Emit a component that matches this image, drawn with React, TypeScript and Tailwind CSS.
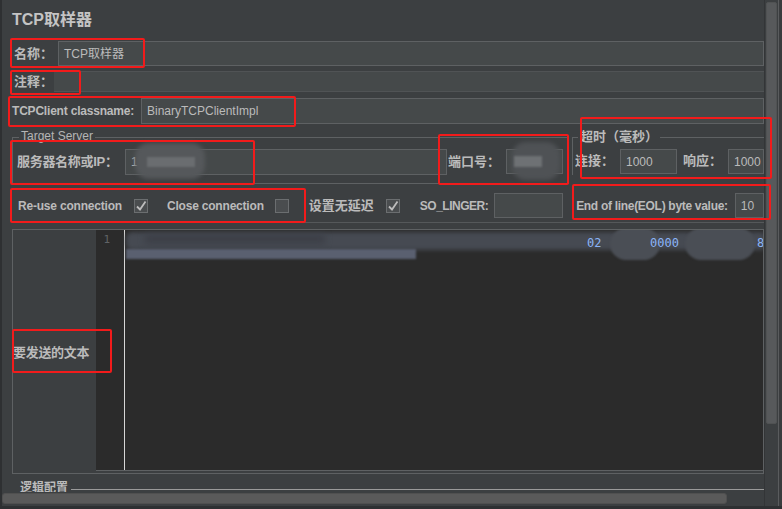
import React from "react";

const font = "font-['Liberation_Sans','Noto_Sans_CJK_SC',sans-serif]";

function Field({ value, className = "" }: { value?: string; className?: string }) {
  return (
    <div
      className={`h-full bg-[#45494a] border border-[#5e6163] flex items-center pl-[5px] text-[12px] text-[#bbbbbb] whitespace-nowrap ${className}`}
    >
      {value}
    </div>
  );
}

function Check({ checked, className = "" }: { checked?: boolean; className?: string }) {
  return (
    <div
      className={`shrink-0 w-[14px] h-[14px] bg-[#4a4d4f] border border-[#6b6e70] flex items-center justify-center ${className}`}
    >
      {checked && (
        <svg width="12" height="12" viewBox="0 0 12 12">
          <path d="M2 6.5 L5 9.5 L10.5 1.5" fill="none" stroke="#bdbdbd" strokeWidth="1.8" />
        </svg>
      )}
    </div>
  );
}

function Mark({ className }: { className: string }) {
  // red annotation frame drawn over the screenshot
  return <div className={`absolute border-2 border-[#f21b1b] rounded-[2px] pointer-events-none ${className}`} />;
}

export default function App() {
  return (
    <div
      className={`relative w-[782px] h-[509px] overflow-hidden bg-[#3c3f41] ${font} text-[#bbbbbb] border-l-2 border-b-[3px] border-[#2e3032]`}
    >
      <div className="flex h-full">
        {/* main form */}
        <div className="w-[762px] flex flex-col pl-[10px]">
          <div className="h-[38px] pt-[10px] text-[16px] leading-[20px] font-bold text-[#c4c4c4]">TCP取样器</div>

          {/* 名称 */}
          <div className="mt-[3px] h-[25px] flex items-center">
            <div className="shrink-0 w-[46px] pl-[2px] text-[13px] font-bold whitespace-nowrap">名称：</div>
            <Field value="TCP取样器" className="flex-1" />
          </div>

          {/* 注释 */}
          <div className="mt-[5px] h-[21px] flex items-center">
            <div className="shrink-0 w-[42px] pl-[2px] text-[13px] font-bold whitespace-nowrap">注释：</div>
            <div className="flex-1 h-full bg-[#45494a] border-y border-[#505355]" />
          </div>

          {/* classname */}
          <div className="mt-[5px] h-[28px] flex items-center py-[1px]">
            <div className="shrink-0 w-[129px] text-[12px] font-bold tracking-[-0.2px] whitespace-nowrap">TCPClient classname:</div>
            <Field value="BinaryTCPClientImpl" className="flex-1" />
          </div>

          {/* groups */}
          <div className="mt-[3px] h-[57px] flex">
            {/* Target Server */}
            <div className="shrink-0 w-[557px] relative pt-[9px]">
              <div className="absolute left-[7px] top-[2px] px-[2px] bg-[#3c3f41] text-[12px] leading-[13px] text-[#b5b5b5]">
                Target Server
              </div>
              <div className="h-[47px] border-l border-t border-b border-[#5e6163] flex items-center pl-[4px] pt-[2px]">
                <div className="shrink-0 w-[108px] text-[13px] font-bold whitespace-nowrap tracking-[-0.3px]">服务器名称或IP：</div>
                <div className="shrink-0 relative w-[322px] h-[26px]">
                  <Field value="1" className="w-full" />
                  <div className="absolute left-[10px] top-[-6px] w-[70px] h-[36px] rounded-[14px] bg-[#55585b] blur-[2px]" />
                  <div className="absolute left-[22px] top-[8px] w-[48px] h-[10px] bg-[#6a6d70] blur-[1px]" />
                </div>
                <div className="shrink-0 ml-[1px] w-[58px] text-[13px] font-bold whitespace-nowrap">端口号：</div>
                <div className="shrink-0 relative w-[57px] h-[25px]">
                  <Field className="w-full" />
                  <div className="absolute left-[6px] top-[-7px] w-[48px] h-[38px] rounded-[14px] bg-[#4f5255] blur-[2px]" />
                  <div className="absolute left-[8px] top-[7px] w-[28px] h-[11px] bg-[#6e7174] blur-[1px]" />
                </div>
              </div>
            </div>

            {/* 超时 */}
            <div className="ml-[3px] flex-1 relative pt-[9px]">
              <div className="absolute left-[6px] top-[1px] px-[2px] bg-[#3c3f41] text-[13px] leading-[15px] font-bold whitespace-nowrap">
                超时（毫秒）
              </div>
              <div className="h-[38px] border-l border-t border-[#5e6163] flex items-end pb-[1px] pl-[2px]">
                <div className="shrink-0 w-[45px] text-[13px] font-bold pb-[4px] whitespace-nowrap">连接：</div>
                <Field value="1000" className="shrink-0 w-[57px] !h-[25px]" />
                <div className="shrink-0 ml-[6px] w-[45px] text-[13px] font-bold pb-[4px] whitespace-nowrap">响应：</div>
                <Field value="1000" className="flex-1 !h-[25px]" />
              </div>
            </div>
          </div>

          {/* checkbox row */}
          <div className="mt-[8px] h-[25px] flex items-center text-[12px] whitespace-nowrap">
            <div className="shrink-0 ml-[6px] font-bold tracking-[-0.2px]">Re-use connection</div>
            <Check checked className="ml-[12px]" />
            <div className="shrink-0 ml-[19px] font-bold tracking-[-0.2px]">Close connection</div>
            <Check className="ml-[11px]" />
            <div className="shrink-0 ml-[20px] font-bold text-[13px]">设置无延迟</div>
            <Check checked className="ml-[12px]" />
            <div className="shrink-0 ml-[20px] font-bold tracking-[-0.5px]">SO_LINGER:</div>
            <Field className="shrink-0 ml-[6px] w-[69px]" />
            <div className="shrink-0 ml-[13px] font-bold tracking-[-0.3px]">End of line(EOL) byte value:</div>
            <Field value="10" className="ml-[7px] flex-1 min-w-0" />
          </div>

          {/* editor */}
          <div className="mt-[4px] border-t border-[#55585a]" />
          <div className="mt-[6px] h-[245px] border border-[#5e6163] flex">
            <div className="shrink-0 w-[83px] flex items-center text-[13px] font-bold pt-[2px] whitespace-nowrap tracking-[-0.3px]">要发送的文本</div>
            <div className="flex-1 flex flex-col">
              <div className="flex-1 flex bg-[#2b2b2b] relative overflow-hidden">
                <div className="w-[28px] text-right pr-[14px] pt-[2px] text-[11px] text-[#606366] font-['DejaVu_Sans_Mono',monospace]">
                  1
                </div>
                <div className="w-px bg-[#d6d6d6]" />
                <div className="flex-1 relative">
                  <div className="absolute left-[1px] top-[2px] w-[640px] h-[18px] bg-[#464a52] blur-[2px] rounded-[6px]" />
                  <div className="absolute left-[20px] top-[4px] w-[180px] h-[10px] bg-[#3d4048] blur-[3px]" />
                  <div className="absolute left-[1px] top-[19px] w-[290px] h-[10px] bg-[#5a6070] blur-[1px]" />
                  <div className="absolute left-[462px] top-[6px] text-[12px] leading-[14px] text-[#8ab4f8] font-['DejaVu_Sans_Mono',monospace]">02</div>
                  <div className="absolute left-[485px] top-[-2px] w-[50px] h-[32px] rounded-full bg-[#4a4e55] blur-[1px]" />
                  <div className="absolute left-[525px] top-[6px] text-[12px] leading-[14px] text-[#8ab4f8] font-['DejaVu_Sans_Mono',monospace]">0000</div>
                  <div className="absolute left-[560px] top-[-2px] w-[70px] h-[32px] rounded-full bg-[#4a4e55] blur-[1px]" />
                  <div className="absolute left-[632px] top-[6px] text-[12px] leading-[14px] text-[#8ab4f8] font-['DejaVu_Sans_Mono',monospace]">8</div>
                </div>
              </div>
              <div className="h-[3px] border-t border-[#5e6163] bg-[#3c3f41]" />
            </div>
          </div>

          {/* 逻辑配置 heading, partly under the scrollbar */}
          <div className="mt-[6px] h-[12px] flex items-end overflow-hidden">
            <div className="ml-[8px] text-[12px] leading-[14px] font-bold translate-y-[3px]">逻辑配置</div>
            <div className="ml-[3px] flex-1 h-px bg-[#9a9a9a] mb-[2px]" />
          </div>
          {/* horizontal scrollbar */}
          <div className="-ml-[10px] mt-px h-[11px] w-[725px] rounded-[3px] bg-[#5a5a5a] border border-[#505050]" />
        </div>

        {/* vertical scrollbar */}
        <div className="w-[14px] h-full border-l border-[#333537] bg-[#3c3f41] pt-[2px] px-[1px]">
          <div className="w-[11px] h-[422px] rounded-[2px] bg-[#57595b] border border-[#505253]" />
        </div>
        <div className="w-[4px] h-full border-l border-[#5a5c5e] bg-[#3a3c3e]" />
      </div>

      {/* annotation frames */}
      <Mark className="left-[8px] top-[38px] w-[135px] h-[30px]" />
      <Mark className="left-[8px] top-[70px] w-[71px] h-[25px]" />
      <Mark className="left-[6px] top-[96px] w-[288px] h-[31px]" />
      <Mark className="left-[8px] top-[140px] w-[245px] h-[45px]" />
      <Mark className="left-[436px] top-[134px] w-[131px] h-[51px]" />
      <Mark className="left-[578px] top-[117px] w-[192px] h-[62px]" />
      <Mark className="left-[8px] top-[188px] w-[296px] h-[35px]" />
      <Mark className="left-[570px] top-[184px] w-[199px] h-[36px]" />
      <Mark className="left-[10px] top-[329px] w-[100px] h-[44px]" />
    </div>
  );
}
